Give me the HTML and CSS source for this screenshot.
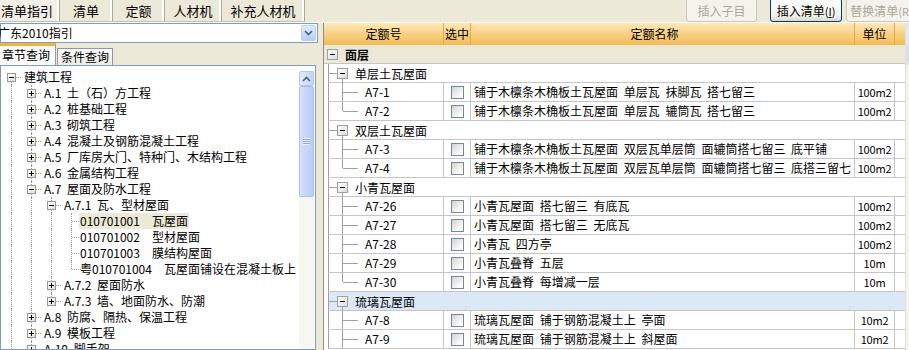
FILE: index.html
```html
<!DOCTYPE html>
<html lang="zh-CN">
<head>
  <meta charset="UTF-8" />
  <title>清单指引</title>
  <link rel="stylesheet" href="styles.css">
</head>
<body>
<div class="app">

  <!-- barra superior: pestañas y botones -->
  <div class="topbar">
    <div class="tabs">
      <span class="tab">清单指引</span>
      <span class="tab">清单</span>
      <span class="tab">定额</span>
      <span class="tab">人材机</span>
      <span class="tab">补充人材机</span>
    </div>
    <div class="btns">
      <span class="btn off b1">插入子目</span>
      <span class="btn b2">插入清单<small>(<u>I</u>)</small></span>
      <span class="btn off b3">替换清单<small>(R)</small></span>
    </div>
  </div>

  <div class="main">

    <!-- panel izquierdo -->
    <div class="left">
      <div class="combo">
        <span class="combo-text">广东2010指引</span>
        <span class="combo-btn">
          <svg width="9" height="6" viewBox="0 0 9 6"><polyline points="1,1 4.5,4.5 8,1" fill="none" stroke="#4d6185" stroke-width="1.6"/></svg>
        </span>
      </div>
      <div class="qtabs">
        <span class="qtab on">章节查询</span>
        <span class="qtab">条件查询</span>
      </div>
      <div class="tree">
        <div class="tlist">
          <div class="node"><span class="g b first"><i class="bx"></i></span><span class="lbl">建筑工程</span></div>
          <div class="node"><span class="g v"></span><span class="g b"><i class="bx plus"></i></span><span class="lbl">A.1 土（石）方工程</span></div>
          <div class="node"><span class="g v"></span><span class="g b"><i class="bx plus"></i></span><span class="lbl">A.2 桩基础工程</span></div>
          <div class="node"><span class="g v"></span><span class="g b"><i class="bx plus"></i></span><span class="lbl">A.3 砌筑工程</span></div>
          <div class="node"><span class="g v"></span><span class="g b"><i class="bx plus"></i></span><span class="lbl">A.4 混凝土及钢筋混凝土工程</span></div>
          <div class="node"><span class="g v"></span><span class="g b"><i class="bx plus"></i></span><span class="lbl">A.5 厂库房大门、特种门、木结构工程</span></div>
          <div class="node"><span class="g v"></span><span class="g b"><i class="bx plus"></i></span><span class="lbl">A.6 金属结构工程</span></div>
          <div class="node"><span class="g v"></span><span class="g b"><i class="bx"></i></span><span class="lbl">A.7 屋面及防水工程</span></div>
          <div class="node"><span class="g v"></span><span class="g v"></span><span class="g b"><i class="bx"></i></span><span class="lbl">A.7.1 瓦、型材屋面</span></div>
          <div class="node leaf"><span class="g v"></span><span class="g v"></span><span class="g v"></span><span class="g t"></span><span class="lbl sel">010701001　瓦屋面</span></div>
          <div class="node leaf"><span class="g v"></span><span class="g v"></span><span class="g v"></span><span class="g t"></span><span class="lbl">010701002　型材屋面</span></div>
          <div class="node leaf"><span class="g v"></span><span class="g v"></span><span class="g v"></span><span class="g t"></span><span class="lbl">010701003　膜结构屋面</span></div>
          <div class="node leaf"><span class="g v"></span><span class="g v"></span><span class="g v"></span><span class="g l"></span><span class="lbl">粤010701004　瓦屋面铺设在混凝土板上</span></div>
          <div class="node"><span class="g v"></span><span class="g v"></span><span class="g b"><i class="bx plus"></i></span><span class="lbl">A.7.2 屋面防水</span></div>
          <div class="node"><span class="g v"></span><span class="g v"></span><span class="g b last"><i class="bx plus"></i></span><span class="lbl">A.7.3 墙、地面防水、防潮</span></div>
          <div class="node"><span class="g v"></span><span class="g b"><i class="bx plus"></i></span><span class="lbl">A.8 防腐、隔热、保温工程</span></div>
          <div class="node"><span class="g v"></span><span class="g b"><i class="bx plus"></i></span><span class="lbl">A.9 模板工程</span></div>
          <div class="node"><span class="g v"></span><span class="g b"><i class="bx plus"></i></span><span class="lbl">A.10 脚手架</span></div>
        </div>
        <div class="vs">
          <span class="vs-up">
            <svg width="9" height="6" viewBox="0 0 9 6"><polyline points="1,5 4.5,1.5 8,5" fill="none" stroke="#4d6185" stroke-width="1.6"/></svg>
          </span>
          <span class="vs-thumb"><i class="grip"></i></span>
        </div>
      </div>
    </div>

    <div class="split"></div>

    <!-- tabla de cuotas -->
    <div class="right">
      <div class="grid">
        <div class="ghead">
          <div class="hc">定额号</div>
          <div class="hc">选中</div>
          <div class="hc name">定额名称</div>
          <div class="hc">单位</div>
          <div class="hc"></div>
        </div>

        <div class="r-top"><i class="sq"></i><b>面层</b></div>

        <div class="r-grp"><span class="stub"></span><i class="sq"></i><span class="gname">单层土瓦屋面</span></div>
        <div class="r-item"><div class="c-id">A7-1</div><div class="c-sel"><i class="chk"></i></div><div class="c-name">铺于木檩条木桷板土瓦屋面 单层瓦 抹脚瓦 搭七留三</div><div class="c-unit">100m2</div><div class="c-end"></div></div>
        <div class="r-item last"><div class="c-id">A7-2</div><div class="c-sel"><i class="chk"></i></div><div class="c-name">铺于木檩条木桷板土瓦屋面 单层瓦 辘筒瓦 搭七留三</div><div class="c-unit">100m2</div><div class="c-end"></div></div>

        <div class="r-grp"><span class="stub"></span><i class="sq"></i><span class="gname">双层土瓦屋面</span></div>
        <div class="r-item"><div class="c-id">A7-3</div><div class="c-sel"><i class="chk"></i></div><div class="c-name">铺于木檩条木桷板土瓦屋面 双层瓦单层筒 面辘筒搭七留三 底平铺</div><div class="c-unit">100m2</div><div class="c-end"></div></div>
        <div class="r-item last"><div class="c-id">A7-4</div><div class="c-sel"><i class="chk"></i></div><div class="c-name">铺于木檩条木桷板土瓦屋面 双层瓦单层筒 面辘筒搭七留三 底搭三留七</div><div class="c-unit">100m2</div><div class="c-end"></div></div>

        <div class="r-grp"><span class="stub"></span><i class="sq"></i><span class="gname">小青瓦屋面</span></div>
        <div class="r-item"><div class="c-id">A7-26</div><div class="c-sel"><i class="chk"></i></div><div class="c-name">小青瓦屋面 搭七留三 有底瓦</div><div class="c-unit">100m2</div><div class="c-end"></div></div>
        <div class="r-item"><div class="c-id">A7-27</div><div class="c-sel"><i class="chk"></i></div><div class="c-name">小青瓦屋面 搭七留三 无底瓦</div><div class="c-unit">100m2</div><div class="c-end"></div></div>
        <div class="r-item"><div class="c-id">A7-28</div><div class="c-sel"><i class="chk"></i></div><div class="c-name">小青瓦 四方亭</div><div class="c-unit">100m2</div><div class="c-end"></div></div>
        <div class="r-item"><div class="c-id">A7-29</div><div class="c-sel"><i class="chk"></i></div><div class="c-name">小青瓦叠脊 五层</div><div class="c-unit">10m</div><div class="c-end"></div></div>
        <div class="r-item last"><div class="c-id">A7-30</div><div class="c-sel"><i class="chk"></i></div><div class="c-name">小青瓦叠脊 每增减一层</div><div class="c-unit">10m</div><div class="c-end"></div></div>

        <div class="r-grp hl"><span class="stub"></span><i class="sq"></i><span class="gname">琉璃瓦屋面</span></div>
        <div class="r-item"><div class="c-id">A7-8</div><div class="c-sel"><i class="chk"></i></div><div class="c-name">琉璃瓦屋面 铺于钢筋混凝土上 亭面</div><div class="c-unit">10m2</div><div class="c-end"></div></div>
        <div class="r-item"><div class="c-id">A7-9</div><div class="c-sel"><i class="chk"></i></div><div class="c-name">琉璃瓦屋面 铺于钢筋混凝土上 斜屋面</div><div class="c-unit">10m2</div><div class="c-end"></div></div>
      </div>
      <div class="rs">
        <span class="rs-up"></span>
        <span class="rs-thumb"></span>
      </div>
    </div>

  </div>
</div>
</body>
</html>
```

FILE: styles.css
```css
* {
  box-sizing: border-box;
}
body {
  margin: 0;
  overflow: hidden;
  background: #ece9d8;
  font-family: "Noto Sans CJK SC", "Noto Sans", sans-serif;
  font-size: 12px;
  color: #000;
}
.app {
  width: 922px;
  height: 350px;
  display: flex;
  flex-direction: column;
}

/* barra superior */
.topbar {
  height: 23px;
  flex: none;
  display: flex;
  border-bottom: 1px solid #fbfbf8;
}
.tabs {
  display: flex;
  height: 22px;
  border-bottom: 1px solid #c4c1b2;
}
.tab {
  font-size: 13px;
  line-height: 21px;
  text-align: center;
  border-right: 1px solid #aca899;
  box-shadow: inset -2px 0 0 #fff;
}
.tab:nth-child(1) { width: 60px; text-align: left; padding-left: 1px; background: #f1efe6; }
.tab:nth-child(2) { width: 53px; }
.tab:nth-child(3) { width: 52px; }
.tab:nth-child(4) { width: 57px; }
.tab:nth-child(5) { width: 83px; }
.btns {
  margin-left: auto;
  display: flex;
  margin-right: 5px;
}
.btn {
  height: 24px;
  margin-top: -2px;
  width: 72px;
  border: 1px solid #003c74;
  border-radius: 3px;
  background: linear-gradient(#ffffff, #f3f2ec 75%, #dcd8cb);
  text-align: center;
  line-height: 22px;
  padding-top: 1px;
}
.btn small {
  font-size: 11px;
}
.btn.off {
  border-color: #cbc8bb;
  color: #aca899;
  background: #f4f3ec;
}
.b1 { width: 71px; margin-right: 13px; }
.b2 { margin-right: 4px; }
.b3 { width: 71px; }

/* zona principal */
.main {
  flex: 1;
  display: flex;
  min-height: 0;
}
.left {
  width: 318px;
  flex: none;
  display: flex;
  flex-direction: column;
}
.combo {
  height: 20px;
  flex: none;
  background: #fff;
  border: 1px solid #7f9db9;
  display: flex;
  align-items: center;
}
.combo-text {
  flex: 1;
  margin-left: -3px;
  line-height: 18px;
}
.combo-btn {
  width: 15px;
  height: 16px;
  margin-right: 1px;
  border: 1px solid #b9cdf6;
  border-radius: 2px;
  background: linear-gradient(#e3ebfe, #b8cdf9);
  display: flex;
  align-items: center;
  justify-content: center;
}
.qtabs {
  height: 22px;
  flex: none;
  display: flex;
  align-items: flex-end;
}
.qtab {
  width: 56px;
  height: 17px;
  border: 1px solid #919b9c;
  border-bottom: none;
  background: linear-gradient(#fefefe, #ecebe5);
  text-align: center;
  line-height: 16px;
  margin-left: 1px;
}
.qtab.on {
  height: 22px;
  margin-left: 0;
  border-left: none;
  border-top: 3px solid #f5b13a;
  background: #fcfcfe;
  text-align: left;
  padding-left: 2px;
  line-height: 18px;
}

/* árbol */
.tree {
  flex: 1;
  width: 316px;
  min-height: 0;
  background: #fff;
  border: 1px solid #7f9db9;
  display: flex;
  overflow: hidden;
}
.tlist {
  flex: 1;
  padding-top: 3px;
  overflow: hidden;
}
.node {
  height: 16px;
  display: flex;
  align-items: center;
  white-space: nowrap;
}
.lbl {
  margin-left: 2px;
  padding: 0 1px;
  line-height: 16px;
  word-spacing: 3px;
}
.leaf .lbl {
  margin-left: -2px;
}
.lbl.sel {
  background: #ece9d8;
}
.g {
  position: relative;
  width: 20px;
  height: 16px;
  flex: none;
}
.g.v::before,
.g.t::before,
.g.l::before,
.g.b::before {
  content: "";
  position: absolute;
  left: 10px;
  top: 0;
  bottom: 0;
  border-left: 1px dotted #a0a0a0;
}
.g.l::before,
.g.b.last::before {
  bottom: 8px;
}
.g.b.first::before {
  top: 8px;
}
.g.t::after,
.g.l::after,
.g.b::after {
  content: "";
  position: absolute;
  left: 11px;
  right: 0;
  top: 8px;
  border-top: 1px dotted #a0a0a0;
}
.bx {
  position: absolute;
  left: 6px;
  top: 4px;
  width: 9px;
  height: 9px;
  z-index: 1;
  border: 1px solid #919b9c;
  background: linear-gradient(135deg, #ffffff, #e2e0d6);
}
.bx::before {
  content: "";
  position: absolute;
  left: 1px;
  top: 3px;
  width: 5px;
  height: 1px;
  background: #000;
}
.bx.plus::after {
  content: "";
  position: absolute;
  left: 3px;
  top: 1px;
  width: 1px;
  height: 5px;
  background: #000;
}
.vs {
  width: 15px;
  flex: none;
  margin: 5px 1px 0 0;
  background: #f7f6f1;
  display: flex;
  flex-direction: column;
}
.vs-up {
  height: 15px;
  border: 1px solid #b4c8f6;
  border-radius: 2px;
  background: linear-gradient(90deg, #e3ebfe, #c2d4fb);
  display: flex;
  align-items: center;
  justify-content: center;
}
.vs-thumb {
  height: 111px;
  border: 1px solid #abc0f1;
  border-radius: 2px;
  background: linear-gradient(90deg, #d4e0fd, #b9cdf9);
  display: flex;
  align-items: center;
  justify-content: center;
}
.grip {
  width: 7px;
  height: 7px;
  background: repeating-linear-gradient(#eef3fe 0 1px, #8ca6e0 1px 2px);
}
.split {
  width: 5px;
  flex: none;
}

/* tabla */
.right {
  flex: 1;
  display: flex;
  background: #fff;
  border-left: 1px solid #8e8e8a;
}
.grid {
  width: 581px;
  flex: none;
}
.ghead {
  height: 22px;
  display: grid;
  grid-template-columns: 120px 27px 384px 40px 10px;
  background: linear-gradient(#fde9bb, #f9d389 45%, #f3bb56);
}
.hc {
  text-align: center;
  line-height: 22px;
  border-right: 1px solid #e2a94f;
}
.hc:last-child {
  border-right: none;
}
.hc.name {
  padding-right: 16px;
}
.r-top {
  height: 19px;
  display: flex;
  align-items: center;
  background: #ece9d8;
  border-bottom: 1px solid #c6c6c6;
}
.r-top .sq {
  margin-left: 3px;
}
.r-top b {
  margin-left: 7px;
}
.sq {
  position: relative;
  width: 11px;
  height: 11px;
  flex: none;
  border: 1px solid #a0a0a0;
  background: linear-gradient(135deg, #ffffff, #dcdcdc);
}
.sq::before {
  content: "";
  position: absolute;
  left: 2px;
  top: 4px;
  width: 5px;
  height: 1px;
  background: #000;
}
.r-grp {
  position: relative;
  height: 19px;
  margin-left: 4px;
  display: flex;
  align-items: center;
  border-left: 1px solid #a0a0a0;
  border-bottom: 1px solid #c6c6c6;
}
.r-grp.hl {
  background: #dde8f6;
}
.r-grp::after {
  content: "";
  position: absolute;
  left: 13px;
  top: 14px;
  bottom: -1px;
  border-left: 1px solid #a0a0a0;
}
.stub {
  width: 8px;
  border-top: 1px solid #a0a0a0;
}
.gname {
  margin-left: 7px;
}
.r-item {
  height: 19px;
  margin-left: 4px;
  display: grid;
  grid-template-columns: 115px 27px 384px 40px 10px;
  border-left: 1px solid #a0a0a0;
  border-bottom: 1px solid #c6c6c6;
}
.r-item > div {
  line-height: 18px;
  border-right: 1px solid #c6c6c6;
  white-space: nowrap;
  overflow: hidden;
}
.r-item > .c-end {
  border-right: none;
}
.c-id {
  position: relative;
  padding-left: 36px;
}
.c-id::before {
  content: "";
  position: absolute;
  left: 13px;
  top: 0;
  bottom: 0;
  border-left: 1px solid #a0a0a0;
}
.c-id::after {
  content: "";
  position: absolute;
  left: 14px;
  top: 9px;
  width: 15px;
  border-top: 1px solid #a0a0a0;
}
.r-item.last .c-id::before {
  bottom: 9px;
}
.c-sel {
  display: flex;
  align-items: center;
  justify-content: center;
}
.chk {
  width: 13px;
  height: 13px;
  border: 1px solid #6f87a8;
  background: linear-gradient(135deg, #d4d3ca, #fdfdfb 80%);
}
.c-name {
  padding-left: 3px;
  word-spacing: 3px;
}
.c-unit {
  text-align: center;
  font-size: 11px;
  letter-spacing: -0.2px;
}
.rs {
  width: 17px;
  flex: none;
  background: #f4f3ee;
  border-left: 1px solid #e2e0d6;
  display: flex;
  flex-direction: column;
}
.rs-up {
  height: 22px;
  background: linear-gradient(90deg, #e3ebfe, #c2d4fb);
}
.rs-thumb {
  height: 20px;
  background: linear-gradient(90deg, #d9e3f6, #c4d1ea);
}
```
